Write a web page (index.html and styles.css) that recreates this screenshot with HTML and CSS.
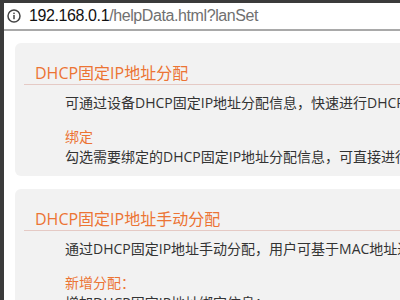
FILE: index.html
```html
<!DOCTYPE html>
<html>
<head>
<meta charset="utf-8">
<link rel="stylesheet" href="styles.css">
</head>
<body>
<div class="topbar"></div>
<div class="window">
  <div class="strip"></div>
  <div class="main">
    <div class="addr">
      <svg class="info" width="14" height="14" viewBox="0 0 14 14">
        <circle cx="7" cy="7" r="6" fill="none" stroke="#444" stroke-width="1.5"/>
        <rect x="6.25" y="6" width="1.5" height="4.2" fill="#444"/>
        <rect x="6.25" y="3.6" width="1.5" height="1.5" fill="#444"/>
      </svg>
      <span class="host">192.168.0.1</span><span class="path">/helpData.html?lanSet</span>
    </div>
    <div class="page">
      <div class="card">
        <h2 class="title">DHCP固定IP地址分配</h2>
        <div class="content">
          <p class="line">可通过设备DHCP固定IP地址分配信息，快速进行DHCP固定IP地址分配的设置。</p>
          <p class="sub">绑定</p>
          <p class="line">勾选需要绑定的DHCP固定IP地址分配信息，可直接进行绑定操作。</p>
        </div>
      </div>
      <div class="card">
        <h2 class="title">DHCP固定IP地址手动分配</h2>
        <div class="content">
          <p class="line">通过DHCP固定IP地址手动分配，用户可基于MAC地址进行IP地址分配。</p>
          <p class="sub">新增分配：</p>
          <p class="line">增加DHCP固定IP地址绑定信息；</p>
        </div>
      </div>
    </div>
  </div>
</div>
</body>
</html>
```

FILE: styles.css
```css
html, body {
  margin: 0;
  padding: 0;
  width: 400px;
  height: 300px;
  overflow: hidden;
  background: #fff;
  font-family: "Open Sans", "Noto Sans CJK SC", sans-serif;
}
.topbar {
  height: 3px;
  background: #3b3b3b;
}
.window {
  display: flex;
  height: 297px;
}
.strip {
  width: 4px;
  flex: none;
  background: #3b3b3b;
}
.main {
  flex: 1;
  min-width: 0;
  overflow: hidden;
}
.addr {
  height: 26px;
  display: flex;
  align-items: center;
  border-bottom: 2px solid #a9a9a9;
  white-space: nowrap;
  font-family: "Liberation Sans", sans-serif;
  font-size: 16px;
  letter-spacing: -0.4px;
}
.info {
  margin-left: 3px;
  margin-right: 8px;
  flex: none;
}
.host { color: #111; }
.path { color: #707070; }
.page {
  padding: 12px 0 0 11px;
}
.card {
  width: 600px;
  background: #f2f2f2;
  border-radius: 6px;
  padding: 19px 0 9px 9px;
  margin-bottom: 13px;
  white-space: nowrap;
}
.title {
  margin: 0;
  padding-left: 11px;
  font-size: 16px;
  font-weight: normal;
  line-height: 22px;
  color: #ec7434;
  border-bottom: 1px solid #e5cac5;
}
.content {
  padding-left: 41px;
  padding-top: 8px;
}
.line {
  margin: 0;
  font-size: 14px;
  line-height: 20px;
  color: #333;
}
.sub {
  margin: 14px 0 0;
  font-size: 14px;
  line-height: 20px;
  color: #ec7434;
}
```
